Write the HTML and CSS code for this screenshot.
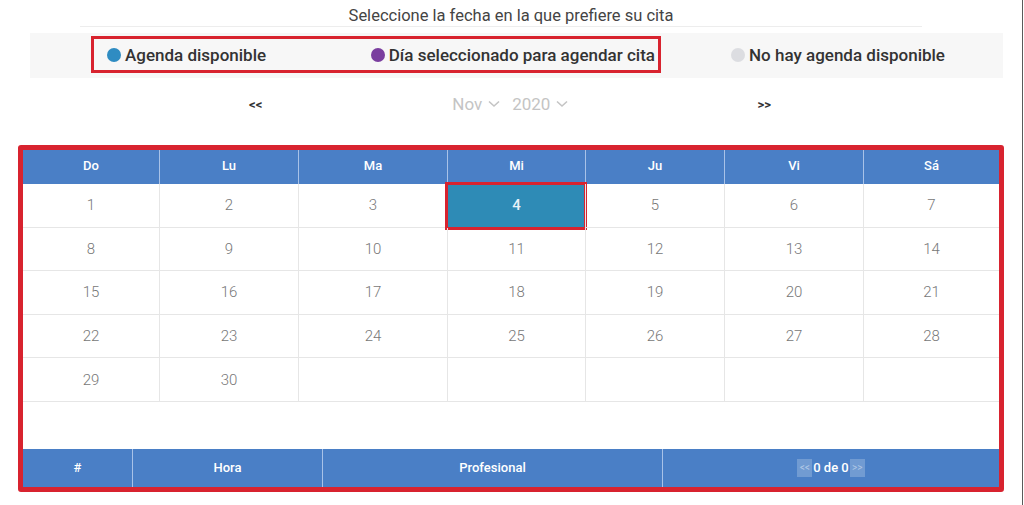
FILE: index.html
```html
<!DOCTYPE html>
<html lang="es">
<head>
<meta charset="utf-8">
<title>Calendario de citas</title>
<link rel="stylesheet" href="styles.css">
</head>
<body>
<div class="page">
  <p class="title">Seleccione la fecha en la que prefiere su cita</p>
  <div class="rule"></div>

  <div class="legend-band">
    <div class="legend-box">
      <span class="item"><i class="dot dot-blue"></i>Agenda disponible</span>
      <span class="item"><i class="dot dot-purple"></i>Día seleccionado para agendar cita</span>
    </div>
    <span class="item item-none"><i class="dot dot-gray"></i>No hay agenda disponible</span>
  </div>

  <div class="nav">
    <span class="nav-arrow">&lt;&lt;</span>
    <span class="select select-month">Nov
      <svg class="chev" width="12" height="8" viewBox="0 0 12 8"><path d="M1 1.5 L6 6 L11 1.5" fill="none" stroke="#c4c4c4" stroke-width="1.6"/></svg>
    </span>
    <span class="select select-year">2020
      <svg class="chev" width="12" height="8" viewBox="0 0 12 8"><path d="M1 1.5 L6 6 L11 1.5" fill="none" stroke="#c4c4c4" stroke-width="1.6"/></svg>
    </span>
    <span class="nav-arrow nav-next">&gt;&gt;</span>
  </div>

  <div class="calendar">
    <div class="head">
      <span>Do</span><span>Lu</span><span>Ma</span><span>Mi</span><span>Ju</span><span>Vi</span><span>Sá</span>
    </div>
    <div class="days">
      <span>1</span><span>2</span><span>3</span><span class="selected">4</span><span>5</span><span>6</span><span>7</span>
      <span>8</span><span>9</span><span>10</span><span>11</span><span>12</span><span>13</span><span>14</span>
      <span>15</span><span>16</span><span>17</span><span>18</span><span>19</span><span>20</span><span>21</span>
      <span>22</span><span>23</span><span>24</span><span>25</span><span>26</span><span>27</span><span>28</span>
      <span>29</span><span>30</span><span></span><span></span><span></span><span></span><span></span>
    </div>
    <div class="spacer"></div>
    <div class="foot">
      <span>#</span>
      <span>Hora</span>
      <span>Profesional</span>
      <span class="pager"><b class="pg">&lt;&lt;</b>0 de 0<b class="pg">&gt;&gt;</b></span>
    </div>
  </div>
</div>
</body>
</html>
```

FILE: styles.css
```css
html, body {
  margin: 0;
  padding: 0;
  background: #ffffff;
}

body {
  font-family: Roboto, "Liberation Sans", Arial, sans-serif;
}

.page {
  width: 1022px;
  height: 505px;
  border-right: 1px solid #5a5a5a;
  overflow: hidden;
}

.title {
  margin: 0;
  padding-top: 6px;
  height: 20px;
  line-height: 20px;
  text-align: center;
  font-size: 16.5px;
  color: #444444;
}

.rule {
  margin: 0 100px 0 80px;
  height: 1px;
  background: #ededed;
}

.legend-band {
  margin: 6px 19px 0 30px;
  height: 45px;
  box-sizing: border-box;
  padding: 3px 0 0 61px;
  background: #f7f7f7;
  display: flex;
  align-items: flex-start;
}

.legend-box {
  width: 570px;
  height: 37px;
  box-sizing: border-box;
  border: 3px solid #d8232f;
  display: flex;
  align-items: center;
  justify-content: space-between;
  padding: 0 3px 0 13px;
}

.item {
  display: flex;
  align-items: center;
  gap: 4px;
  font-size: 17px;
  font-weight: 500;
  color: #333333;
  white-space: nowrap;
}

.item-none {
  margin-left: 70px;
  height: 37px;
}

.dot {
  display: inline-block;
  width: 14px;
  height: 14px;
  border-radius: 50%;
}

.dot-blue { background: #2f8cc2; }
.dot-purple { background: #7a3e9f; }
.dot-gray { background: #dcdde1; }

.nav {
  display: flex;
  align-items: center;
  height: 20px;
  margin-top: 16px;
  padding-left: 249px;
}

.nav-arrow {
  font-size: 13px;
  font-weight: 700;
  color: #333333;
}

.select {
  display: flex;
  align-items: center;
  gap: 6px;
  font-size: 17px;
  color: #c4c4c4;
}

.select-month { margin-left: 190px; }
.select-year { margin-left: 12px; }
.nav-next { margin-left: 189px; }

.calendar {
  margin: 31px 0 0 18px;
  width: 986px;
  box-sizing: border-box;
  border: 5px solid #d8232f;
  border-radius: 3px;
}

.head,
.days {
  display: grid;
  grid-template-columns: 136px 139px 149px 138px 139px 139px 136px;
}

.head {
  height: 34px;
  background: #4a7fc6;
}

.head span {
  display: flex;
  align-items: center;
  justify-content: center;
  padding-bottom: 4px;
  color: #ffffff;
  font-size: 13px;
  font-weight: 500;
  border-left: 1px solid #a8c2e8;
}

.head span:first-child { border-left: none; }

.days {
  grid-auto-rows: 43.6px;
}

.days span {
  display: flex;
  align-items: center;
  justify-content: center;
  box-sizing: border-box;
  border-bottom: 1px solid #e6e6e6;
  border-left: 1px solid #e6e6e6;
  font-size: 15px;
  font-weight: 300;
  color: #777777;
}

.days span:nth-child(7n+1) { border-left: none; }

.days .selected {
  background: #2e8bb6;
  color: #e9f1f8;
  font-weight: 500;
  outline: 3px solid #d8232f;
  outline-offset: -1px;
}

.spacer {
  height: 47px;
}

.foot {
  display: grid;
  grid-template-columns: 109px 190px 340px 1fr;
  height: 38px;
  background: #4a7fc6;
}

.foot span {
  display: flex;
  align-items: center;
  justify-content: center;
  color: #ffffff;
  font-size: 13px;
  font-weight: 500;
  border-left: 1px solid #a8c2e8;
}

.foot span:first-child { border-left: none; }

.pg {
  display: inline-flex;
  align-items: center;
  justify-content: center;
  height: 18px;
  width: 15px;
  margin: 0 1px;
  background: rgba(255, 255, 255, 0.22);
  color: rgba(255, 255, 255, 0.45);
  font-size: 10px;
  font-weight: 400;
}
```
